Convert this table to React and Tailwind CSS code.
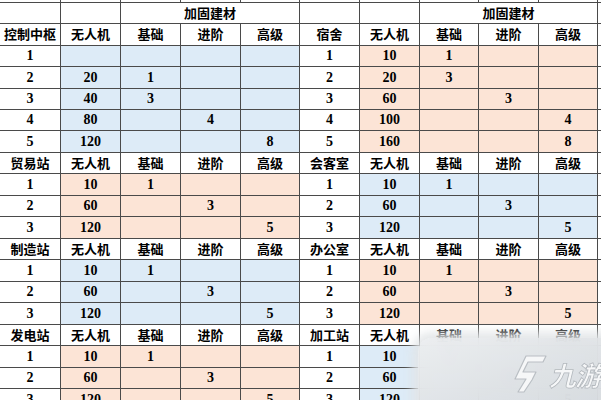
import React from "react";

const B = "bg-[#ddebf7]";
const P = "bg-[#fce4d6]";

const cellBase =
  "flex items-center justify-center font-bold leading-none text-black";

function Cell({ children, cls = "bg-white", span }) {
  const isNum = typeof children === "string" && /^[0-9]+$/.test(children);
  return (
    <div className={`${cellBase} ${isNum ? "text-[14px]" : "text-[13px]"} ${cls} ${span || ""}`}>{children}</div>
  );
}

const firstLeft = [["1", "", "", "", ""], ["2", "20", "1", "", ""], ["3", "40", "3", "", ""], ["4", "80", "", "4", ""], ["5", "120", "", "", "8"]];
const firstRight = [["1", "10", "1", "", ""], ["2", "20", "3", "", ""], ["3", "60", "", "3", ""], ["4", "100", "", "", "4"], ["5", "160", "", "", "8"]];

const std = [["1", "10", "1", "", ""], ["2", "60", "", "3", ""], ["3", "120", "", "", "5"]];
const others = [
  ["贸易站", P, "会客室", B],
  ["制造站", B, "办公室", P],
  ["发电站", P, "加工站", B],
];

export default function App() {
  const cells = [];
  let k = 0;
  for (let i = 0; i < 11; i++) cells.push(<div key={k++} className="bg-white" />);
  cells.push(<Cell key={k++} />, <Cell key={k++} />, <Cell key={k++} span="col-span-3">加固建材</Cell>);
  cells.push(<Cell key={k++} />, <Cell key={k++} />, <Cell key={k++} span="col-span-3">加固建材</Cell>);
  cells.push(<div key={k++} className="bg-white" />);

  const header = (name) => [name, "无人机", "基础", "进阶", "高级"];
  const pushHeader = (l, r) => {
    header(l).forEach((t) => cells.push(<Cell key={k++}>{t}</Cell>));
    header(r).forEach((t) => cells.push(<Cell key={k++}>{t}</Cell>));
    cells.push(<div key={k++} className="bg-white" />);
  };
  const pushRows = (lrows, lc, rrows, rc) => {
    lrows.forEach((row, i) => {
      row.forEach((t, j) => cells.push(<Cell key={k++} cls={j === 0 ? "bg-white" : lc}>{t}</Cell>));
      rrows[i].forEach((t, j) => cells.push(<Cell key={k++} cls={j === 0 ? "bg-white" : rc}>{t}</Cell>));
      cells.push(<div key={k++} className="bg-white" />);
    });
  };

  pushHeader("控制中枢", "宿舍");
  pushRows(firstLeft, B, firstRight, P);
  others.forEach(([ln, lc, rn, rc]) => {
    pushHeader(ln, rn);
    pushRows(std, lc, std, rc);
  });

  return (
    <div
      className="relative w-[601px] h-[400px] overflow-hidden bg-white"
      style={{ fontFamily: '"Liberation Serif", "Noto Sans CJK SC", serif' }}
    >
      <div className="grid gap-px bg-[#4a4a4a] grid-cols-[60px_59px_59px_59px_58px_59px_59px_58px_59px_58px_1fr] grid-rows-[2px_20px_21px_20px_21px_20px_20px_21px_20px_21px_20px_21px_20px_21px_20px_21px_20px_21px_20px_21px_21px]">
        {cells}
      </div>

      {/* watermark */}
      <div className="absolute left-[418px] top-[338px] w-[200px] h-[80px] rounded-tl-[14px] bg-gradient-to-br from-[#eceef0]/95 via-[#dfe2e5]/95 to-[#d4d8dc]/95 backdrop-blur-sm shadow-[0_0_10px_6px_rgba(225,228,231,0.9)]" />
      <div className="absolute left-[512px] top-[352px] flex items-center">
        <svg width="36" height="44" viewBox="0 0 36 44">
          <path
            d="M14 4 L34 4 L31 10 L16 10 L11 20 L24 20 L20 28 L12 40 L6 40 L14 27 L3 27 Z"
            fill="#f6f7f8"
            stroke="#b9bec3"
            strokeWidth="1.2"
            strokeLinejoin="round"
          />
        </svg>
        <span
          className="ml-[1px] text-[27px] font-bold italic leading-none text-[#f6f7f8] tracking-[-1px]"
          style={{ fontFamily: '"Noto Sans CJK SC", sans-serif', WebkitTextStroke: "0.8px #b3b8bd" }}
        >
          九游
        </span>
      </div>
    </div>
  );
}
